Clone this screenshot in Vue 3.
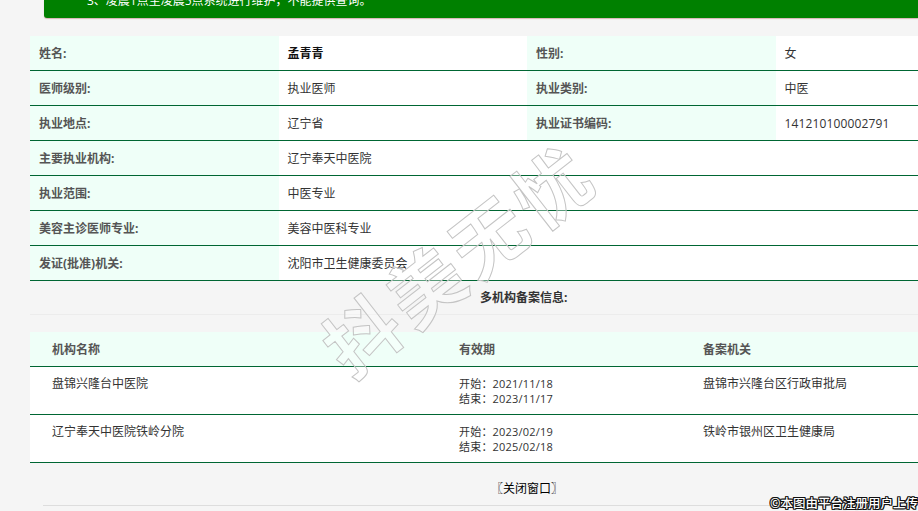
<script setup>
const rows = [
  [['姓名:', '孟青青', 'strong'], ['性别:', '女', '']],
  [['医师级别:', '执业医师', ''], ['执业类别:', '中医', '']],
  [['执业地点:', '辽宁省', ''], ['执业证书编码:', '141210100002791', 'num']],
]
const wideRows = [
  ['主要执业机构:', '辽宁奉天中医院'],
  ['执业范围:', '中医专业'],
  ['美容主诊医师专业:', '美容中医科专业'],
  ['发证(批准)机关:', '沈阳市卫生健康委员会'],
]
const records = [
  { name: '盘锦兴隆台中医院', start: '2021/11/18', end: '2023/11/17', org: '盘锦市兴隆台区行政审批局' },
  { name: '辽宁奉天中医院铁岭分院', start: '2023/02/19', end: '2025/02/18', org: '铁岭市银州区卫生健康局' },
]
</script>

<template>
  <div class="page">
    <div class="notice">
      <p>3、凌晨1点至凌晨5点系统进行维护，不能提供查询。</p>
    </div>

    <div class="info">
      <div v-for="(row, i) in rows" :key="i" class="row">
        <template v-for="cell in row" :key="cell[0]">
          <div class="label">{{ cell[0] }}</div>
          <div class="value" :class="cell[2]">{{ cell[1] }}</div>
        </template>
      </div>
      <div v-for="row in wideRows" :key="row[0]" class="row">
        <div class="label">{{ row[0] }}</div>
        <div class="value wide">{{ row[1] }}</div>
      </div>
    </div>

    <div class="section-title"><span>多机构备案信息:</span></div>

    <div class="records">
      <div class="rec head">
        <div>机构名称</div>
        <div>有效期</div>
        <div>备案机关</div>
      </div>
      <div v-for="r in records" :key="r.name" class="rec body">
        <div>{{ r.name }}</div>
        <div class="dates">
          <div>开始：{{ r.start }}</div>
          <div>结束：{{ r.end }}</div>
        </div>
        <div>{{ r.org }}</div>
      </div>
    </div>

    <div class="close"><span>〖关闭窗口〗</span></div>

    <div class="stamp">抖美无忧</div>
    <div class="credit">©本图由平台注册用户上传</div>
  </div>
</template>

<style>
html, body { margin: 0; overflow: hidden; background: #f5f5f5; }
</style>

<style scoped>
.page {
  position: relative;
  width: 918px;
  height: 511px;
  overflow: hidden;
  background: #f5f5f5;
  font-family: "Open Sans", "Noto Sans CJK SC", sans-serif;
  font-size: 12px;
  color: #333;
}
.notice {
  height: 18px;
  margin-left: 44px;
  padding-left: 43px;
  overflow: hidden;
  background: #008000;
  border-bottom-left-radius: 3px;
  box-shadow: 0 1px 1px rgba(160, 60, 60, .35);
}
.notice p {
  margin: -9px 0 0;
  font-size: 12px;
  line-height: 20px;
  color: #fff;
}
.info {
  width: 994px;
  margin: 18px 0 0 30px;
  background: #fff;
}
.row {
  display: grid;
  grid-template-columns: 248.5px 248.5px 248.5px 248.5px;
  height: 35px;
  box-sizing: border-box;
  border-bottom: 1px solid #006633;
}
.label, .value {
  display: flex;
  align-items: center;
  padding-left: 9px;
}
.label {
  background: #efffF8;
  font-weight: 700;
  color: #555;
}
.value.strong {
  font-weight: 700;
  color: #111;
}
.value.num { letter-spacing: .14px; }
.value.wide { grid-column: 2 / 5; }
.section-title {
  width: 988px;
  height: 34px;
  margin-left: 30px;
  box-sizing: border-box;
  border-bottom: 1px solid #ececec;
  display: flex;
  align-items: center;
  padding: 0 0 1px 450px;
  font-weight: 700;
}
.records {
  width: 994px;
  margin: 17px 0 0 30px;
  background: #fff;
}
.rec {
  display: grid;
  box-sizing: border-box;
  padding-left: 22px;
  grid-template-columns: 407px 244px 321px;
  border-bottom: 1px solid #006633;
}
.rec.head {
  height: 35px;
  align-items: center;
  background: #efffF8;
  font-weight: 700;
  color: #555;
}
.rec.body {
  height: 48px;
  padding-top: 9px;
  line-height: 15px;
}
.dates {
  font-size: 11px;
  letter-spacing: .2px;
}
.close {
  height: 43px;
  margin-left: 43px;
  width: 975px;
  box-sizing: border-box;
  border-bottom: 1px solid #ddd;
  display: flex;
  align-items: center;
  padding: 8px 0 0 448px;
  color: #000;
}
.stamp {
  position: absolute;
  left: 297px;
  top: 212px;
  font-size: 74px;
  font-weight: 700;
  line-height: 90px;
  letter-spacing: 6px;
  white-space: nowrap;
  font-family: "Noto Sans CJK SC", sans-serif;
  color: rgba(255, 255, 255, .35);
  -webkit-text-stroke: 1px #c4c4c4;
  transform: rotate(-38deg);
  pointer-events: none;
}
.credit {
  position: absolute;
  right: 0;
  bottom: 0;
  font-size: 12.5px;
  font-weight: 500;
  line-height: 17px;
  color: #fff;
  font-family: "Noto Sans CJK SC", sans-serif;
  text-shadow: -1px 0 #111, 1px 0 #111, 0 -1px #111, 0 1px #111, -1px -1px #111, 1px 1px #111, -1px 1px #111, 1px -1px #111;
}
</style>
